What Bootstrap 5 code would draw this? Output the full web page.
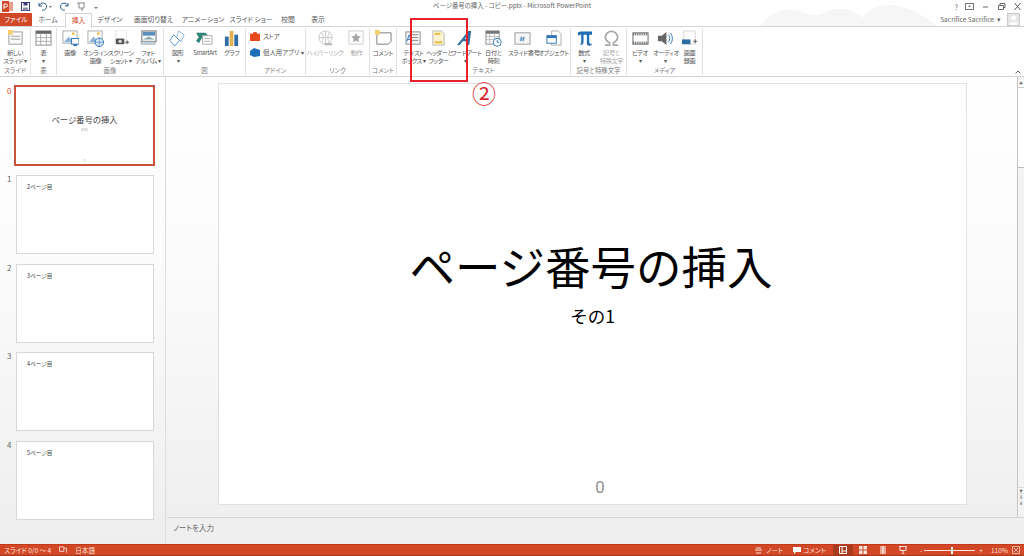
<!DOCTYPE html>
<html lang="ja">
<head>
<meta charset="utf-8">
<title>ページ番号の挿入</title>
<link rel="stylesheet" href="https://cdn.jsdelivr.net/npm/bootstrap@5.3.0/dist/css/bootstrap.min.css">
<style>
html,body{height:100%;margin:0;overflow:hidden}
body{font-family:"Noto Sans CJK JP","Liberation Sans",sans-serif;font-feature-settings:"palt";font-size:7px;line-height:8px;color:#555;background:#fff}
.app-shell{height:556px;width:1024px}
.title-row{height:13px;padding-left:2px}
.title-text{left:0;right:0;top:2px;font-size:6.4px;color:#666;text-align:center}
.decor{left:760px;top:0;width:180px;height:27px;color:#f6f6f6}
.qa-gap{gap:8px}
.win-ctl{gap:7px;padding-right:2px;color:#666}
.tab-row{height:14px;border-bottom:1px solid #d4d4d4}
.tab-x{font-size:6.8px;line-height:13px;text-align:center;color:#555}
.tab-file{width:32px;background:#d24726;color:#fff}
.tab-on{width:27px;color:#d24726;background:#fff;border:1px solid #d4d4d4;border-bottom:0;height:15px;margin-left:1px;position:relative;z-index:1}
.t32{width:32px}.t36{width:36px}.t51{width:51px}.t48{width:48px}.t26{width:26px}.t34{width:34px}
.user-box{color:#666;font-size:6.6px;padding-right:4px;gap:3px;line-height:13px}
.avatar-box{width:13px;height:13px;background:#e6e6e6;border:1px solid #ccc;margin-left:3px;overflow:hidden}
.rib{height:50px;border-bottom:1px solid #d4d4d4;background:#fff}
.rgrp{height:47px;margin-top:1px;border-right:1px solid #e1e1e1;position:relative}
.g31{width:31px}.g26{width:26px}.g107{width:107px}.g82{width:82px}.g60{width:60px}.g64{width:64px}.g27{width:27px}.g174{width:174px}.g56{width:56px}.g76{width:76px}
.ritems{height:39px}
.ritem{text-align:center;padding-top:2px;color:#555;white-space:nowrap;font-size:6.2px;letter-spacing:-.35px}
.ritem svg{display:block;margin:0 auto 2px;width:17px;height:17px}
.ritem.off{color:#a8a8a8}
.i25{width:25px}.i26{width:26px}.i27{width:27px}.i28{width:28px}.i29{width:29px}.i30{width:30px}.i33{width:33px}.i38{width:38px}.i24{width:24px}.i31{width:31px}
.rcap{text-align:center;color:#777;height:8px;line-height:8px;font-size:6.4px;white-space:nowrap}
.addin-col{padding:4px 0 0 4px;gap:7px;height:39px;white-space:nowrap;font-size:6.4px}
.addin-row{gap:3px;color:#555}
.collapse-mark{width:12px;padding-top:43px}
.collapse-mark svg{display:block;margin:0 auto}
.body-row{height:467px;background:linear-gradient(#fff 0,#fbfbfb 40%,#eeeeee 100%)}
.thumbs{width:166px;border-right:1px solid #dedede;padding-top:9.500px}
.th-row{padding-left:7px;height:88.5px}
.th-num{width:9px;font-size:8px;color:#666;padding-top:0;line-height:8px}
.th-num-on{color:#d24726}
.th-box{width:138px;height:79px;background:#fff;border:1px solid #d8d8d8;padding:8px 0 0 10px;font-size:5.6px;line-height:7px;color:#333}
.th-first{width:141px;height:81px;border:2px solid #c9533a;margin-left:-2px;margin-top:-1.500px;padding:0;margin-bottom:8px;text-align:center;color:#333;position:relative}
.th-t{font-size:8.4px;line-height:10px;padding-top:27px;color:#444}
.th-s{font-size:3px;line-height:4px;color:#999;margin-top:4px}
.th-n{font-size:3px;line-height:4px;color:#aaa;margin-top:27px}
.editor{width:858px}
.edit-top{height:440px}
.stage{width:851px;padding:6px 0 0 52px}
.slide-page{width:749px;height:422px;background:#fff;border:1px solid #e2e2e2;text-align:center;color:#000}
.sl-title{font-size:45.5px;line-height:60px;padding-top:151px;font-feature-settings:normal;padding-right:3px}
.sl-sub{font-size:17.5px;line-height:24px;margin-top:9px;font-feature-settings:normal}
.sl-num{font-family:"Liberation Sans",sans-serif;font-size:16px;line-height:18px;color:#8b8b8b;padding:0 0 7px 15px;margin-top:auto}
.vscroll{width:7px;border-left:1px solid #c4c4c4;background:#f3f3f3;color:#777;font-size:5px;line-height:6px;text-align:center}
.vs-btn{height:8px;background:#fff;border-bottom:1px solid #ccc;font-size:4px;margin-top:3px}
.vs-thumb{height:80px;background:#fff;border-bottom:1px solid #bbb}
.vs-end{margin-top:auto;padding-bottom:11px}
.vs-endb{background:#fff;height:7px;border:1px solid #ddd;border-width:1px 0;font-size:4px}
.notes{height:27px;border-top:1px solid #d6d6d6;margin-left:1px;padding:5px 0 0 6px;background:#efefef;font-size:7.5px;line-height:10px;color:#666}
.status{height:12px;background:#d24726;color:#fbe5dd;border-top:1px solid #c4391a;border-bottom:1px solid #a8391d;line-height:10px;font-size:6.6px;padding-left:4px}
.st-view{width:20px;height:10px}
.st-view-on{background:#a83a1e;margin-left:7px}
.st-cmt{margin:0 2px 0 10px}
.st-minus{margin-left:7px}
.slider-track{width:51px;height:1px;background:#fbe5dd;position:relative;margin-left:2px}
.slider-knob{position:absolute;left:27px;top:-3px;width:2px;height:7px;background:#fff}
.annot-box{left:410px;top:18px;width:58px;height:64px;border:2px solid #e8202a;z-index:5}
.annot-num{left:471px;top:82px;width:26px;font-family:"Liberation Serif","Noto Sans CJK JP",serif;font-size:24px;line-height:26px;color:#d9262c;text-align:center;z-index:5;font-feature-settings:normal}
</style>
</head>
<body>
<div class="app-shell position-relative d-flex flex-column">

  <svg class="decor position-absolute" viewBox="0 0 180 27"><path fill="currentColor" d="M0 27C10 10 30 6 42 12c8 4 16 4 24 0 14-7 30-2 36 6 8-10 22-16 36-12 14 3 30 12 42 21z"/></svg>

  <div class="title-row d-flex align-items-center position-relative">
    <div class="title-text position-absolute">ページ番号の挿入 - コピー.pptx - Microsoft PowerPoint</div>
    <div class="d-flex align-items-center qa-gap position-relative">
      <svg width="11" height="11" viewBox="0 0 11 11"><rect x="3" y="1" width="8" height="9" fill="#e8a08c"/><rect x="0" y="0" width="7" height="11" fill="#d24726"/><path d="M2 8V3h2a1.300 1.300 0 0 1 0 3H2" stroke="#fff" fill="none"/></svg>
      <svg width="9" height="9" viewBox="0 0 9 9"><rect x=".5" y=".5" width="8" height="8" fill="none" stroke="#3b3b78"/><rect x="2.500" y=".5" width="4" height="3" fill="#3b3b78"/><rect x="2" y="5.500" width="5" height="3" fill="#8a8ab0"/></svg>
      <svg width="14" height="9" viewBox="0 0 14 9"><path d="M1 1v3h3M1.500 4A3.500 3.500 0 1 1 4 8" fill="none" stroke="#2b5b8c"/><path d="M11 4h3l-1.500 2z" fill="#777"/></svg>
      <svg width="9" height="9" viewBox="0 0 9 9"><path d="M8 1v3H5M7.500 4A3.500 3.500 0 1 0 5 8" fill="none" stroke="#2b5b8c"/></svg>
      <svg width="9" height="9" viewBox="0 0 9 9"><path d="M0 1h8M2 1v5h5V1M4 8h2M5 6v2" fill="none" stroke="#888"/></svg>
      <svg width="4" height="9" viewBox="0 0 4 9"><path d="M0 3h4M0 5h4l-2 2z" fill="#777" stroke="none"/></svg>
    </div>
    <div class="ms-auto d-flex align-items-center win-ctl position-relative">
      <span>?</span>
      <svg width="9" height="7" viewBox="0 0 9 7"><rect x=".5" y=".5" width="8" height="6" fill="none" stroke="#777"/><path d="M3 4l1.500-2L6 4z" fill="#777"/></svg>
      <svg width="9" height="7" viewBox="0 0 9 7"><path d="M2 4h5" stroke="#666"/></svg>
      <svg width="9" height="7" viewBox="0 0 9 7"><path d="M1.500 2.500h5v4h-5zM3 2.500V.500h5v4H6.500" fill="none" stroke="#666"/></svg>
      <svg width="9" height="7" viewBox="0 0 9 7"><path d="M1.500 0l6 7M7.500 0l-6 7" stroke="#555"/></svg>
    </div>
  </div>

  <div class="tab-row d-flex position-relative">
    <div class="tab-x tab-file">ファイル</div>
    <div class="tab-x t32">ホーム</div>
    <div class="tab-x tab-on">挿入</div>
    <div class="tab-x t36">デザイン</div>
    <div class="tab-x t51">画面切り替え</div>
    <div class="tab-x t48">アニメーション</div>
    <div class="tab-x t48">スライド ショー</div>
    <div class="tab-x t26">校閲</div>
    <div class="tab-x t34">表示</div>
    <div class="ms-auto d-flex user-box">
      <span>Sacrifice Sacrifice</span><span>▾</span>
      <div class="avatar-box"><svg width="11" height="11" viewBox="0 0 11 11" class="d-block"><circle cx="5.500" cy="4" r="2.500" fill="#fff"/><path d="M1 11c0-4 9-4 9 0z" fill="#fff"/></svg></div>
    </div>
  </div>

  <div class="rib d-flex">
    <div class="rgrp g31">
      <div class="ritems d-flex"><div class="ritem i30"><svg viewBox="0 0 18 18"><rect x="2" y="2" width="14" height="13" fill="#fafafa" stroke="#9a9a9a"/><rect x="4" y="6" width="10" height="1.500" fill="#bbb"/><rect x="4" y="9" width="10" height="1.500" fill="#bbb"/><path d="M1 0h5v5H1z" fill="#f4cf6a"/></svg>新しい<br>スライド ▾</div></div>
      <div class="rcap">スライド</div>
    </div>
    <div class="rgrp g26">
      <div class="ritems d-flex"><div class="ritem i25"><svg viewBox="0 0 18 18"><rect x="1" y="1" width="16" height="15" fill="#fff" stroke="#8a8a8a"/><rect x="1" y="1" width="16" height="3" fill="#666"/><path d="M1 8h16M1 12h16M6 4v12M12 4v12" stroke="#aaa" fill="none"/></svg>表<br>▾</div></div>
      <div class="rcap">表</div>
    </div>
    <div class="rgrp g107">
      <div class="ritems d-flex">
        <div class="ritem i26"><svg viewBox="0 0 18 18"><rect x="1" y="1" width="15" height="13" fill="#fff" stroke="#aaa"/><path d="M2 13l5-6 5 6z" fill="#8fb4d9"/><circle cx="12" cy="4" r="1.500" fill="#f0c14b"/><rect x="10" y="9" width="8" height="6" fill="#fff" stroke="#2e75b6"/><rect x="12" y="15" width="4" height="2" fill="#2e75b6"/></svg>画像</div>
        <div class="ritem i25"><svg viewBox="0 0 18 18"><rect x="1" y="1" width="15" height="13" fill="#fff" stroke="#aaa"/><path d="M2 13l5-6 5 6z" fill="#8fb4d9"/><circle cx="12" cy="4" r="1.500" fill="#f0c14b"/><circle cx="13" cy="13" r="4.500" fill="#dbe8f5" stroke="#2e75b6"/><path d="M8.500 13h9M13 8.500v9" stroke="#2e75b6" stroke-width=".6"/></svg>オンライン<br>画像</div>
        <div class="ritem i26"><svg viewBox="0 0 18 18"><rect x="3" y="0" width="11" height="14" fill="#fff" stroke="#ccc" stroke-dasharray="1.500 1"/><rect x="3" y="9" width="9" height="6" rx="1" fill="#555"/><circle cx="7.500" cy="12" r="1.800" fill="#ddd"/><path d="M13 13h4M15 11v4" stroke="#555"/></svg>スクリーン<br>ショット ▾</div>
        <div class="ritem i28"><svg viewBox="0 0 18 18"><rect x="2" y="1" width="15" height="11" fill="#fff" stroke="#666"/><rect x="3" y="2" width="13" height="4" fill="#5b8fbf"/><path d="M3 10l6-3 7 3z" fill="#8aa"/><rect x="1" y="12" width="15" height="3" fill="#c4d3e3" stroke="#888" stroke-width=".5"/></svg>フォト<br>アルバム ▾</div>
      </div>
      <div class="rcap">画像</div>
    </div>
    <div class="rgrp g82">
      <div class="ritems d-flex">
        <div class="ritem i28"><svg viewBox="0 0 18 18"><path d="M10 1l6 4-3 7-5-3z" fill="#fff" stroke="#8fb4d9"/><path d="M5 5l6 6-5 6-5-6z" fill="#fff" stroke="#2e75b6" stroke-width=".8"/></svg>図形<br>▾</div>
        <div class="ritem i27"><svg viewBox="0 0 18 18"><path d="M0 3h10l3 3-3 3H6l-3 5-3-3 3-3z" fill="#2f8577"/><rect x="7" y="6" width="10" height="9" fill="#fff" stroke="#aaa"/><path d="M9 9h6M9 12h6" stroke="#aaa"/></svg>SmartArt</div>
        <div class="ritem i27"><svg viewBox="0 0 18 18"><rect x="2" y="7" width="4" height="10" fill="#2e6da4"/><rect x="7" y="1" width="4" height="16" fill="#e0b252"/><rect x="12" y="5" width="4" height="12" fill="#2e6da4"/></svg>グラフ</div>
      </div>
      <div class="rcap">図</div>
    </div>
    <div class="rgrp g60">
      <div class="addin-col d-flex flex-column">
        <div class="addin-row d-flex align-items-center"><svg width="10" height="9" viewBox="0 0 10 9"><path d="M0 2h10v7H0zM3 2a2 2 0 0 1 4 0" fill="#e8481c" stroke="#e8481c" stroke-width=".6"/></svg>ストア</div>
        <div class="addin-row d-flex align-items-center"><svg width="10" height="9" viewBox="0 0 10 9"><path d="M0 3l4-3 6 2v6l-6 1-4-2z" fill="#1e6fb5"/></svg>個人用アプリ&nbsp;▾</div>
      </div>
      <div class="rcap">アドイン</div>
    </div>
    <div class="rgrp g64">
      <div class="ritems d-flex">
        <div class="ritem off i38"><svg viewBox="0 0 18 18"><circle cx="9" cy="8" r="7" fill="#fff" stroke="#c8c8c8"/><path d="M2 8h14M9 1v14M5 2.500c2 3 2 8 0 11M13 2.500c-2 3-2 8 0 11" stroke="#c8c8c8" fill="none"/><path d="M8 15h8" stroke="#bbb" stroke-width="2.500"/></svg>ハイパーリンク</div>
        <div class="ritem off i25"><svg viewBox="0 0 18 18"><rect x="1" y="1" width="15" height="14" fill="#fff" stroke="#ccc"/><path d="M8.500 3l1.600 3.400 3.700.4-2.800 2.500.8 3.700-3.300-1.900-3.300 1.900.8-3.700-2.800-2.500 3.700-.4z" fill="#a6a6a6"/></svg>動作</div>
      </div>
      <div class="rcap">リンク</div>
    </div>
    <div class="rgrp g27">
      <div class="ritems d-flex"><div class="ritem i26"><svg viewBox="0 0 18 18"><path d="M2 3h15v9l-3 3H2z" fill="#fff" stroke="#777"/><rect x="0" y="0" width="5" height="5" fill="#f4cf6a"/></svg>コメント</div></div>
      <div class="rcap">コメント</div>
    </div>
    <div class="rgrp g174">
      <div class="ritems d-flex">
        <div class="ritem i29 ps-1"><svg viewBox="0 0 18 18"><rect x="1" y="2" width="15" height="13" fill="#f5f5f5" stroke="#8a8a8a"/><path d="M7 5h7M7 8h7M7 11h7" stroke="#888"/><path d="M2 12l2.500-7L7 12M3 10h3" stroke="#2e75b6" fill="none"/></svg>テキスト<br>ボックス ▾</div>
        <div class="ritem i25"><svg viewBox="0 0 18 18"><path d="M3 1h9l3 3v12H3z" fill="#fdf3d0" stroke="#b9b9b9"/><rect x="5" y="3" width="6" height="2" fill="#e8b93d"/><rect x="5" y="12" width="8" height="2" fill="#e8b93d"/></svg>ヘッダーと<br>フッター</div>
        <div class="ritem i28"><svg viewBox="0 0 18 18"><path d="M12 1h3l-2 15h-3l.5-4H6l-3 4H0zM11 9.500l.6-4.500-3.500 4.500z" fill="#2e6da4"/></svg>ワードアート<br>▾</div>
        <div class="ritem i29"><svg viewBox="0 0 18 18"><rect x="1" y="1" width="14" height="14" fill="#fff" stroke="#888"/><rect x="1" y="1" width="14" height="3" fill="#777"/><path d="M1 7h14M1 10h14M5 4v11M10 4v11" stroke="#bbb"/><circle cx="13" cy="13" r="4.200" fill="#fff" stroke="#2e75b6"/><path d="M13 10.500V13h2" stroke="#2e75b6" fill="none"/></svg>日付と<br>時刻</div>
        <div class="ritem i29"><svg viewBox="0 0 18 18"><rect x="1" y="3" width="16" height="12" fill="#f6f6f6" stroke="#999"/><path d="M8 7l-1 5M10.500 7l-1 5M6.500 8.500h5M6 10.500h5" stroke="#2e6da4" stroke-width=".7"/></svg>スライド番号</div>
        <div class="ritem i33"><svg viewBox="0 0 18 18"><path d="M7 1h7l3 3v12H7z" fill="#fff" stroke="#aaa"/><rect x="2" y="6" width="10" height="8" fill="#fff" stroke="#2e75b6"/><rect x="2" y="6" width="10" height="2.500" fill="#2e75b6"/></svg>オブジェクト</div>
      </div>
      <div class="rcap">テキスト</div>
    </div>
    <div class="rgrp g56">
      <div class="ritems d-flex">
        <div class="ritem i26"><svg viewBox="0 0 18 18"><path d="M2 3c1-1 2-1.500 4-1.500h11V5h-3v8c0 1 .4 1.500 1.500 1.500h1V16c-2 1-5 1-5-2V5H8v7c0 3-1 4-3.500 4V15c1 0 1-1 1-3V5C4 5 3 5.500 2.500 6.500z" fill="#1f6fb5"/></svg>数式<br>▾</div>
        <div class="ritem off i29"><svg viewBox="0 0 18 18"><path d="M2 16h5v-2.500C4 12 2.500 10 2.500 7.500 2.500 4 5.500 1.500 9 1.500s6.500 2.500 6.500 6c0 2.500-1.500 4.500-4.500 6V16h5" fill="none" stroke="#a8a8a8" stroke-width="1.800"/></svg>記号と<br>特殊文字</div>
      </div>
      <div class="rcap">記号と特殊文字</div>
    </div>
    <div class="rgrp g76">
      <div class="ritems d-flex">
        <div class="ritem i26"><svg viewBox="0 0 18 18"><rect x="1" y="3" width="16" height="12" fill="#fff" stroke="#666"/><path d="M1 4.500h16M1 13.500h16" stroke="#666" stroke-width="2.500" stroke-dasharray="1 1"/></svg>ビデオ<br>▾</div>
        <div class="ritem i24"><svg viewBox="0 0 18 18"><path d="M1 6h4l5-4v14l-5-4H1z" fill="#666"/><path d="M12 5c2 2 2 6 0 8M14 3c3 3 3 9 0 12" stroke="#2e75b6" fill="none"/></svg>オーディオ<br>▾</div>
        <div class="ritem i25"><svg viewBox="0 0 18 18"><rect x="3" y="1" width="12" height="14" fill="#fff" stroke="#bbb" stroke-dasharray="1.500 1"/><rect x="1" y="10" width="9" height="5" fill="#2e6da4"/><path d="M13 12h4M15 10v4" stroke="#555"/></svg>画面<br>録画</div>
      </div>
      <div class="rcap">メディア</div>
    </div>
    <div class="ms-auto collapse-mark"><svg width="6" height="4" viewBox="0 0 6 4"><path d="M.5 3.500L3 1l2.500 2.500" fill="none" stroke="#666"/></svg></div>
  </div>

  <div class="body-row d-flex">
    <div class="thumbs">
      <div class="th-row d-flex"><div class="th-num th-num-on">0</div><div class="th-box th-first"><div class="th-t">ページ番号の挿入</div><div class="th-s">その1</div><div class="th-n">0</div></div></div>
      <div class="th-row d-flex"><div class="th-num">1</div><div class="th-box">2ページ目</div></div>
      <div class="th-row d-flex"><div class="th-num">2</div><div class="th-box">3ページ目</div></div>
      <div class="th-row d-flex"><div class="th-num">3</div><div class="th-box">4ページ目</div></div>
      <div class="th-row d-flex"><div class="th-num">4</div><div class="th-box">5ページ目</div></div>
    </div>
    <div class="editor d-flex flex-column">
      <div class="edit-top d-flex">
        <div class="stage">
          <div class="slide-page d-flex flex-column">
            <div class="sl-title">ページ番号の挿入</div>
            <div class="sl-sub">その1</div>
            <div class="sl-num">0</div>
          </div>
        </div>
        <div class="vscroll d-flex flex-column">
          <div class="vs-btn">▲</div>
          <div class="vs-thumb"></div>
          <div class="vs-end">
            <div class="vs-endb">▼</div>
            <div>⇞</div>
            <div>⇟</div>
          </div>
        </div>
      </div>
      <div class="notes">ノートを入力</div>
    </div>
  </div>

  <div class="status d-flex align-items-center">
    <span>スライド 0/0 ～ 4</span>
    <svg class="ms-2" width="8" height="8" viewBox="0 0 9 8"><path d="M.5.500h5v5h-5zM6 2h2.500v5" fill="none" stroke="#fbe5dd"/></svg>
    <span class="ms-2">日本語</span>
    <div class="ms-auto d-flex align-items-center">
      <svg class="me-1" width="7" height="7" viewBox="0 0 7 7"><path d="M1 1h5M0 3h7M1 6h5" stroke="#fbe5dd"/></svg>
      <span>ノート</span>
      <svg class="st-cmt" width="8" height="7" viewBox="0 0 8 7"><path d="M0 0h8v5H3L1 7V5H0z" fill="#fff"/></svg>
      <span>コメント</span>
      <div class="st-view st-view-on d-flex align-items-center justify-content-center"><svg width="8" height="8" viewBox="0 0 8 8"><path d="M.5.500h7v7h-7zM3 .5v7M3 5h4" fill="none" stroke="#fff"/></svg></div>
      <div class="st-view d-flex align-items-center justify-content-center"><svg width="8" height="8" viewBox="0 0 8 8"><path d="M0 0h3.500v3.500H0zM4.500 0H8v3.500H4.500zM0 4.500h3.500V8H0zM4.500 4.500H8V8H4.500z" fill="#fbe5dd"/></svg></div>
      <div class="st-view d-flex align-items-center justify-content-center"><svg width="8" height="8" viewBox="0 0 8 8"><path d="M1 0h6v8H1z" fill="#e9a592"/><path d="M4 0v8" stroke="#fff"/></svg></div>
      <div class="st-view d-flex align-items-center justify-content-center"><svg width="8" height="8" viewBox="0 0 8 8"><path d="M0 .500h8M1 .500v4h6v-4M4 4.500V8M2.500 8h3" fill="none" stroke="#fbe5dd"/></svg></div>
      <span class="st-minus">-</span>
      <div class="slider-track me-1"><div class="slider-knob"></div></div>
      <span>+</span>
      <span class="ms-2">110%</span>
      <svg class="ms-1 me-1" width="8" height="8" viewBox="0 0 8 8"><path d="M.5.500h7v7h-7zM2 2l4 4M6 2L2 6" fill="none" stroke="#fbe5dd" stroke-width=".7"/></svg>
    </div>
  </div>

  <div class="annot-box position-absolute"></div>
  <div class="annot-num position-absolute">②</div>
</div>
<script src="https://cdn.jsdelivr.net/npm/bootstrap@5.3.0/dist/js/bootstrap.bundle.min.js"></script>
</body>
</html>
